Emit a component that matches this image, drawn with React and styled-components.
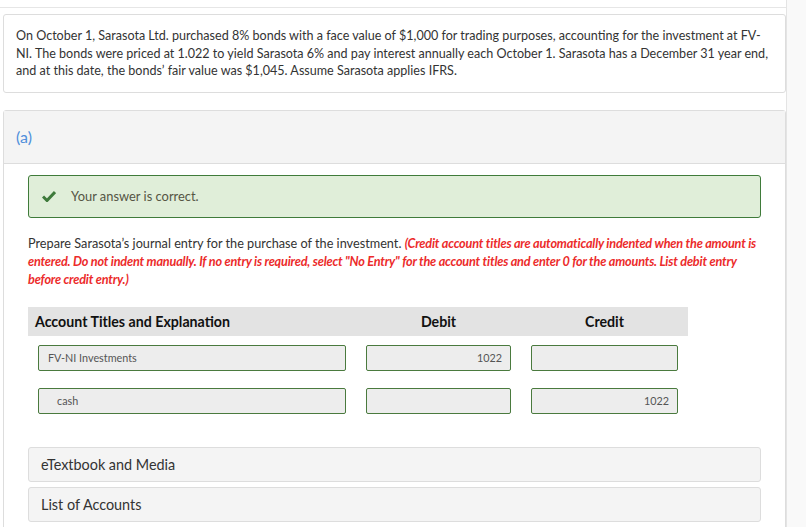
import styled, { createGlobalStyle } from "styled-components";

const GlobalStyle = createGlobalStyle`
  body {
    margin: 0;
    background: #ffffff;
    font-family: Lato, "Open Sans", "Liberation Sans", sans-serif;
    color: #333333;
    overflow: hidden;
  }
`;

const Page = styled.div`
  display: flex;
  width: 806px;
  min-height: 527px;
`;

const MainColumn = styled.div`
  width: 786px;
  flex-shrink: 0;
  padding-left: 3px;
  box-sizing: border-box;
`;

const SideStrip = styled.div`
  flex: 1;
  background: #f9f9f9;
  border-left: 1px solid #e4e4e4;
`;

const TopRule = styled.div`
  height: 7px;
  margin-left: -3px;
  border-bottom: 1px solid #e6e6e6;
  margin-bottom: 6px;
`;

const Card = styled.div`
  border: 1px solid #dddddd;
  border-radius: 3px;
  background: #ffffff;
`;

const ProblemText = styled.p`
  margin: 0;
  padding: 12px 9px 12px 12px;
  font-size: 12.57px;
  line-height: 17.5px;
  color: #333333;
`;

const PartCard = styled(Card)`
  margin-top: 17px;
  min-height: 440px;
  border-bottom-left-radius: 0;
  border-bottom-right-radius: 0;
`;

const PartHeader = styled.div`
  background: #f4f4f4;
  height: 52px;
  border-bottom: 1px solid #dddddd;
  display: flex;
  align-items: center;
  padding-left: 12px;
  font-size: 16px;
  color: #4f8fdb;
`;

const PartBody = styled.div`
  padding: 11px 24px 0 24px;
`;

const CorrectBox = styled.div`
  display: flex;
  align-items: center;
  gap: 15px;
  height: 41px;
  padding-left: 13px;
  background: #e0eed9;
  border: 1px solid #3f7b3a;
  border-radius: 3px;
  font-size: 12.9px;
  color: #555544;
`;

const Instructions = styled.p`
  margin: 16px 0 0 0;
  font-size: 12.7px;
  line-height: 18px;
  color: #333333;
`;

const RedNote = styled.span`
  color: #ec2b2b;
  font-style: italic;
  font-weight: 700;
  letter-spacing: -0.2px;
`;

const JournalTable = styled.div`
  margin-top: 19px;
  width: 660px;
  display: grid;
  grid-template-columns: 328px 165px 167px;
`;

const HeadCell = styled.div`
  background: #e3e3e3;
  height: 29px;
  display: flex;
  align-items: center;
  justify-content: ${(p) => (p.$left ? "flex-start" : "center")};
  padding-left: ${(p) => (p.$left ? "7px" : "0")};
  font-size: 14.2px;
  font-weight: 700;
  color: #111111;
`;

const Cell = styled.div`
  padding: ${(p) => (p.$first ? "9px" : "17px")} 10px 0 10px;
`;

const EntryInput = styled.div`
  box-sizing: border-box;
  height: 26px;
  background: #ededed;
  border: 1px solid #4a7a3e;
  border-radius: 2px;
  display: flex;
  align-items: center;
  justify-content: ${(p) => (p.$num ? "flex-end" : "flex-start")};
  padding: 0 ${(p) => (p.$num ? "8px" : "0")} 0 ${(p) => (p.$indent ? "18px" : "9px")};
  font-size: 10.8px;
  color: #555555;
`;

const ResourceBox = styled.div`
  height: 33px;
  display: flex;
  align-items: center;
  padding-left: 12px;
  background: #f4f4f4;
  border: 1px solid #dddddd;
  border-radius: 3px;
  font-size: 14.4px;
  color: #333333;
  margin-top: ${(p) => (p.$first ? "33px" : "5px")};
`;

const CheckIcon = () => (
  <svg width="14" height="12" viewBox="0 0 14 12">
    <path d="M1 6.5 L5 10.5 L13 2" fill="none" stroke="#3e7a3b" strokeWidth="3" />
  </svg>
);

const rows = [
  { account: "FV-NI Investments", debit: "1022", credit: "", indent: false },
  { account: "cash", debit: "", credit: "1022", indent: true },
];

export default function App() {
  return (
    <>
      <GlobalStyle />
      <Page>
        <MainColumn>
          <TopRule />
          <Card>
            <ProblemText>
              On October 1, Sarasota Ltd. purchased 8% bonds with a face value of $1,000 for trading
              purposes, accounting for the investment at FV-
              <br />
              NI. The bonds were priced at 1.022 to yield Sarasota 6% and pay interest annually each
              October 1. Sarasota has a December 31 year end,
              <br />
              and at this date, the bonds’ fair value was $1,045. Assume Sarasota applies IFRS.
            </ProblemText>
          </Card>
          <PartCard>
            <PartHeader>(a)</PartHeader>
            <PartBody>
              <CorrectBox>
                <CheckIcon />
                Your answer is correct.
              </CorrectBox>
              <Instructions>
                Prepare Sarasota’s journal entry for the purchase of the investment.{" "}
                <RedNote>
                  (Credit account titles are automatically indented when the amount is entered. Do
                  not indent manually. If no entry is required, select "No Entry" for the account
                  titles and enter 0 for the amounts. List debit entry before credit entry.)
                </RedNote>
              </Instructions>
              <JournalTable>
                <HeadCell $left>Account Titles and Explanation</HeadCell>
                <HeadCell>Debit</HeadCell>
                <HeadCell>Credit</HeadCell>
                {rows.map((r, i) => [
                  <Cell key={`a${i}`} $first={i === 0}>
                    <EntryInput $indent={r.indent}>{r.account}</EntryInput>
                  </Cell>,
                  <Cell key={`d${i}`} $first={i === 0}>
                    <EntryInput $num>{r.debit}</EntryInput>
                  </Cell>,
                  <Cell key={`c${i}`} $first={i === 0}>
                    <EntryInput $num>{r.credit}</EntryInput>
                  </Cell>,
                ])}
              </JournalTable>
              <ResourceBox $first>eTextbook and Media</ResourceBox>
              <ResourceBox>List of Accounts</ResourceBox>
            </PartBody>
          </PartCard>
        </MainColumn>
        <SideStrip />
      </Page>
    </>
  );
}
